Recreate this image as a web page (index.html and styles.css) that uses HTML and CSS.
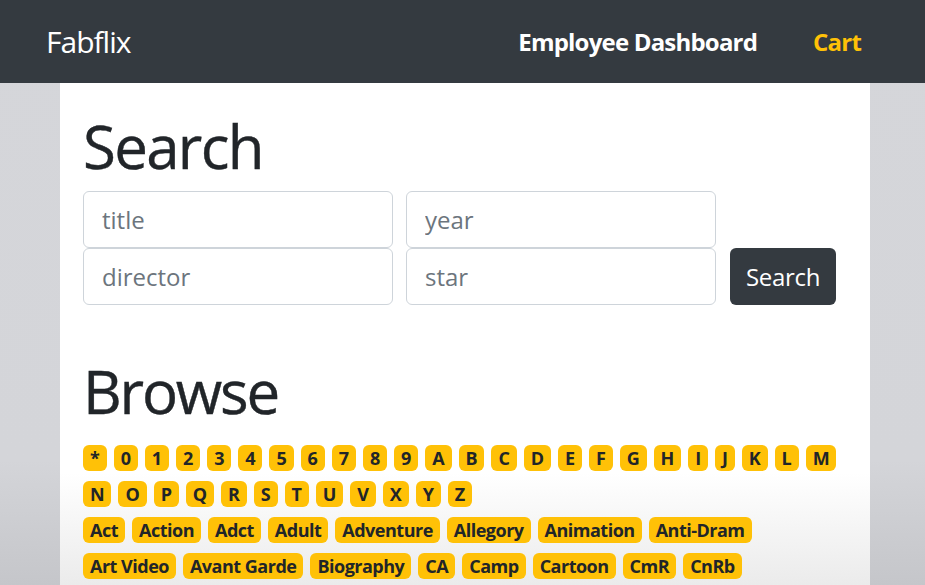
FILE: index.html
```html
<!DOCTYPE html>
<html lang="en">
<head>
<meta charset="utf-8">
<title>Fabflix</title>
<link rel="stylesheet" href="styles.css">
</head>
<body>
<nav class="navbar">
  <a class="brand" href="#">Fabflix</a>
  <div class="nav-links">
    <a class="nav-link" href="#">Employee Dashboard</a>
    <a class="nav-link cart" href="#">Cart</a>
  </div>
</nav>
<main class="container">
  <h1 class="heading">Search</h1>
  <form class="search-form">
    <input class="field f-title" type="text" placeholder="title">
    <input class="field f-year" type="text" placeholder="year">
    <input class="field f-director" type="text" placeholder="director">
    <input class="field f-star" type="text" placeholder="star">
    <button class="search-btn" type="button">Search</button>
  </form>
  <h1 class="heading browse">Browse</h1>
  <div class="badges letters">
    <a class="badge" href="#">*</a>
    <a class="badge" href="#">0</a>
    <a class="badge" href="#">1</a>
    <a class="badge" href="#">2</a>
    <a class="badge" href="#">3</a>
    <a class="badge" href="#">4</a>
    <a class="badge" href="#">5</a>
    <a class="badge" href="#">6</a>
    <a class="badge" href="#">7</a>
    <a class="badge" href="#">8</a>
    <a class="badge" href="#">9</a>
    <a class="badge" href="#">A</a>
    <a class="badge" href="#">B</a>
    <a class="badge" href="#">C</a>
    <a class="badge" href="#">D</a>
    <a class="badge" href="#">E</a>
    <a class="badge" href="#">F</a>
    <a class="badge" href="#">G</a>
    <a class="badge" href="#">H</a>
    <a class="badge" href="#">I</a>
    <a class="badge" href="#">J</a>
    <a class="badge" href="#">K</a>
    <a class="badge" href="#">L</a>
    <a class="badge" href="#">M</a>
  </div>
  <div class="badges letters">
    <a class="badge" href="#">N</a>
    <a class="badge" href="#">O</a>
    <a class="badge" href="#">P</a>
    <a class="badge" href="#">Q</a>
    <a class="badge" href="#">R</a>
    <a class="badge" href="#">S</a>
    <a class="badge" href="#">T</a>
    <a class="badge" href="#">U</a>
    <a class="badge" href="#">V</a>
    <a class="badge" href="#">X</a>
    <a class="badge" href="#">Y</a>
    <a class="badge" href="#">Z</a>
  </div>
  <div class="badges genres">
    <a class="badge" href="#">Act</a>
    <a class="badge" href="#">Action</a>
    <a class="badge" href="#">Adct</a>
    <a class="badge" href="#">Adult</a>
    <a class="badge" href="#">Adventure</a>
    <a class="badge" href="#">Allegory</a>
    <a class="badge" href="#">Animation</a>
    <a class="badge" href="#">Anti-Dram</a>
    <a class="badge" href="#">Art Video</a>
    <a class="badge" href="#">Avant Garde</a>
    <a class="badge" href="#">Biography</a>
    <a class="badge" href="#">CA</a>
    <a class="badge" href="#">Camp</a>
    <a class="badge" href="#">Cartoon</a>
    <a class="badge" href="#">CmR</a>
    <a class="badge" href="#">CnRb</a>
  </div>
</main>
</body>
</html>
```
FILE: styles.css
```css
* {
  box-sizing: border-box;
}

html, body {
  margin: 0;
  height: 100%;
}

body {
  font-family: "Open Sans", "Noto Sans", sans-serif;
  color: #212529;
  background: linear-gradient(to bottom, #d5d6da 0, #d4d5d9 460px, #c5c6ca 585px);
  overflow: hidden;
}

.navbar {
  height: 83px;
  background: #343a40;
  display: flex;
  align-items: center;
  justify-content: space-between;
  padding: 0 64px 0 46px;
}

.brand {
  color: #fff;
  font-size: 30px;
  letter-spacing: -1px;
  text-decoration: none;
}

.nav-links {
  display: flex;
  gap: 56px;
}

.nav-link {
  color: #fff;
  font-size: 24px;
  font-weight: 700;
  letter-spacing: -0.8px;
  text-decoration: none;
}

.nav-link.cart {
  color: #ffc107;
}

.container {
  margin: 0 55px 0 60px;
  padding: 27px 23px 0;
  min-height: calc(100% - 83px);
  background: linear-gradient(to bottom, #fff 0, #fff 390px, #ebebeb 502px);
}

.heading {
  margin: 0 0 9px;
  font-size: 60px;
  font-weight: 500;
  line-height: 1.2;
  letter-spacing: -1.7px;
  -webkit-text-stroke: 0.4px #212529;
}

.heading.browse {
  margin: 50px 0 18px;
  letter-spacing: -2.2px;
}

.search-form {
  display: grid;
  grid-template-columns: 310px 310px 107px;
  grid-template-areas:
    "title year ."
    "director star btn";
  column-gap: 13px;
}

.f-title { grid-area: title; }
.f-year { grid-area: year; }
.f-director { grid-area: director; }
.f-star { grid-area: star; }

.field {
  height: 57px;
  border: 1px solid #ced4da;
  border-radius: 6px;
  padding: 0 18px;
  font: inherit;
  font-size: 24px;
  color: #495057;
  background: #fff;
}

.field::placeholder {
  color: #6c757d;
}

.search-btn {
  grid-area: btn;
  margin-left: 1px;
  height: 57px;
  border: 0;
  border-radius: 6px;
  background: #343a40;
  color: #fff;
  font: inherit;
  font-size: 24px;
  letter-spacing: -0.3px;
}

.badges {
  display: flex;
  flex-wrap: wrap;
  gap: 10px 7px;
  margin-bottom: 10px;
}

.badge {
  display: inline-block;
  padding: 4px 7px;
  border-radius: 6px;
  background: #ffc107;
  color: #212529;
  font-size: 18px;
  font-weight: 700;
  line-height: 1;
  text-decoration: none;
}

.letters .badge {
  letter-spacing: -0.15px;
}

.genres .badge {
  letter-spacing: -0.5px;
}
```
